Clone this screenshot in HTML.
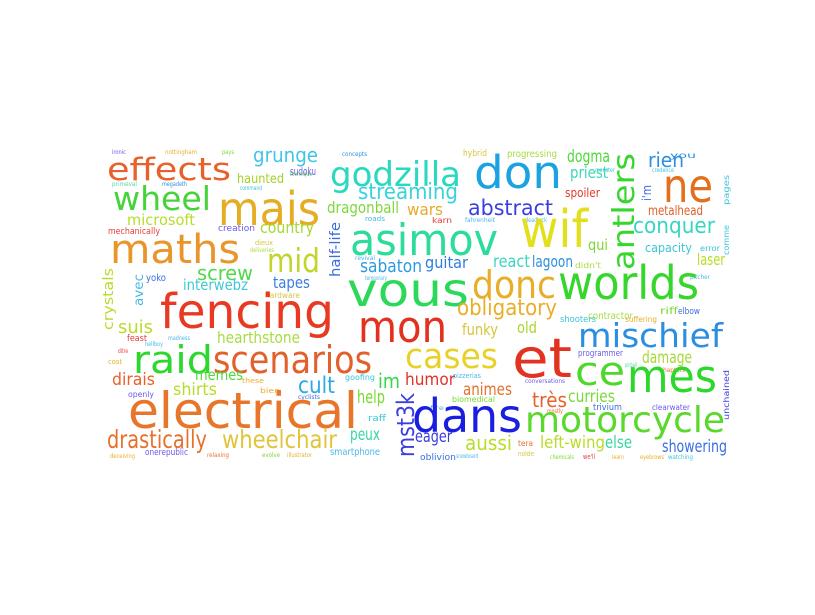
<!DOCTYPE html>
<html><head><meta charset="utf-8"><style>
html,body{margin:0;padding:0;background:#fff;}
svg{display:block}
text{font-family:"DejaVu Sans","Liberation Sans",sans-serif;}
</style></head><body>
<svg width="815" height="615" viewBox="0 0 815 615" xmlns="http://www.w3.org/2000/svg">
<g lengthAdjust="spacingAndGlyphs">
<!-- small filler -->
<text x="112" y="154" font-size="6" fill="#6a5ae8" textLength="14" lengthAdjust="spacingAndGlyphs">ironic</text>
<text x="165" y="154" font-size="6" fill="#e8ae2a" textLength="32" lengthAdjust="spacingAndGlyphs">nottingham</text>
<text x="222" y="154" font-size="6" fill="#7ad830" textLength="12" lengthAdjust="spacingAndGlyphs">pays</text>
<text x="342" y="156" font-size="6" fill="#2c8ee0" textLength="25" lengthAdjust="spacingAndGlyphs">concepts</text>
<text x="112" y="186" font-size="6" fill="#50d8a0" textLength="25" lengthAdjust="spacingAndGlyphs">primeval</text>
<text x="162" y="186" font-size="6" fill="#2c8ee0" textLength="25" lengthAdjust="spacingAndGlyphs">megadeth</text>
<text x="290" y="176" font-size="6" fill="#50d83a" textLength="22" lengthAdjust="spacingAndGlyphs">technique</text>
<text x="240" y="190" font-size="6" fill="#38c6d8" textLength="22" lengthAdjust="spacingAndGlyphs">command</text>
<text x="290" y="178" font-size="1" fill="#fff"> </text>
<text x="290" y="175" font-size="11" fill="#6a5ae8" textLength="26" lengthAdjust="spacingAndGlyphs">sudoku</text>
<text x="108" y="234" font-size="9" fill="#e83a3a" textLength="52" lengthAdjust="spacingAndGlyphs">mechanically</text>
<text x="218" y="231" font-size="9" fill="#6a5ae8" textLength="37" lengthAdjust="spacingAndGlyphs">creation</text>
<text x="255" y="245" font-size="7" fill="#d9c440" textLength="18" lengthAdjust="spacingAndGlyphs">dieux</text>
<text x="250" y="252" font-size="6" fill="#a8dc40" textLength="24" lengthAdjust="spacingAndGlyphs">deliveries</text>
<text x="146" y="281" font-size="10" fill="#3a6ee0" textLength="20" lengthAdjust="spacingAndGlyphs">yoko</text>
<text x="265" y="298" font-size="8" fill="#d9c440" textLength="35" lengthAdjust="spacingAndGlyphs">hardware</text>
<text x="365" y="221" font-size="7" fill="#4ab8e8" textLength="20" lengthAdjust="spacingAndGlyphs">roads</text>
<text x="355" y="260" font-size="6" fill="#4ab8e8" textLength="20" lengthAdjust="spacingAndGlyphs">revival</text>
<text x="365" y="280" font-size="6" fill="#4ab8e8" textLength="22" lengthAdjust="spacingAndGlyphs">temporary</text>
<text x="432" y="223" font-size="8" fill="#e83a3a" textLength="20" lengthAdjust="spacingAndGlyphs">karn</text>
<text x="465" y="222" font-size="6" fill="#4ab8e8" textLength="30" lengthAdjust="spacingAndGlyphs">fahrenheit</text>
<text x="525" y="222" font-size="6" fill="#4ab8e8" textLength="22" lengthAdjust="spacingAndGlyphs">deadlock</text>
<text x="575" y="268" font-size="8" fill="#a8dc40" textLength="26" lengthAdjust="spacingAndGlyphs">didn't</text>
<text x="595" y="172" font-size="6" fill="#38c6d8" textLength="20" lengthAdjust="spacingAndGlyphs">monster</text>
<text x="652" y="172" font-size="6" fill="#38c6d8" textLength="22" lengthAdjust="spacingAndGlyphs">credence</text>
<text x="670" y="158" font-size="8" fill="#2c8ee0" textLength="26" lengthAdjust="spacingAndGlyphs">you</text>
<text x="700" y="251" font-size="8" fill="#38c6d8" textLength="20" lengthAdjust="spacingAndGlyphs">error</text>
<text x="690" y="279" font-size="6" fill="#4ab8e8" textLength="20" lengthAdjust="spacingAndGlyphs">pitcher</text>
<text x="588" y="319" font-size="10" fill="#a8dc40" textLength="45" lengthAdjust="spacingAndGlyphs">contractor</text>
<text x="560" y="322" font-size="9" fill="#38c6d8" textLength="36" lengthAdjust="spacingAndGlyphs">shooters</text>
<text x="625" y="322" font-size="8" fill="#e8ae2a" textLength="32" lengthAdjust="spacingAndGlyphs">suffering</text>
<text x="660" y="314" font-size="10" fill="#7ad830" textLength="18" lengthAdjust="spacingAndGlyphs">riff</text>
<text x="678" y="314" font-size="9" fill="#3a6ee0" textLength="22" lengthAdjust="spacingAndGlyphs">elbow</text>
<text x="578" y="356" font-size="9" fill="#6a5ae8" textLength="45" lengthAdjust="spacingAndGlyphs">programmer</text>
<text x="660" y="372" font-size="6" fill="#e8702a" textLength="25" lengthAdjust="spacingAndGlyphs">chapters</text>
<text x="625" y="367" font-size="6" fill="#50d8a0" textLength="12" lengthAdjust="spacingAndGlyphs">pinball</text>
<text x="525" y="383" font-size="6" fill="#6a5ae8" textLength="40" lengthAdjust="spacingAndGlyphs">conversations</text>
<text x="453" y="378" font-size="7" fill="#4ab8e8" textLength="28" lengthAdjust="spacingAndGlyphs">pizzerias</text>
<text x="453" y="378" font-size="1" fill="#fff"> </text>
<text x="452" y="402" font-size="8" fill="#7ad830" textLength="43" lengthAdjust="spacingAndGlyphs">biomedical</text>
<text x="593" y="410" font-size="9" fill="#3a6ee0" textLength="29" lengthAdjust="spacingAndGlyphs">trivium</text>
<text x="652" y="410" font-size="8" fill="#6a5ae8" textLength="38" lengthAdjust="spacingAndGlyphs">clearwater</text>
<text x="547" y="413" font-size="6" fill="#e8702a" textLength="16" lengthAdjust="spacingAndGlyphs">mostly</text>
<text x="420" y="460" font-size="9" fill="#3a6ee0" textLength="36" lengthAdjust="spacingAndGlyphs">oblivion</text>
<text x="456" y="458" font-size="6" fill="#4ab8e8" textLength="22" lengthAdjust="spacingAndGlyphs">snowboard</text>
<text x="518" y="446" font-size="8" fill="#e8702a" textLength="15" lengthAdjust="spacingAndGlyphs">tera</text>
<text x="518" y="456" font-size="7" fill="#d9c440" textLength="16" lengthAdjust="spacingAndGlyphs">nolde</text>
<text x="550" y="459" font-size="6" fill="#7ad830" textLength="24" lengthAdjust="spacingAndGlyphs">chemicals</text>
<text x="583" y="459" font-size="7" fill="#e83a3a" textLength="12" lengthAdjust="spacingAndGlyphs">we'll</text>
<text x="612" y="459" font-size="6" fill="#e8ae2a" textLength="12" lengthAdjust="spacingAndGlyphs">learn</text>
<text x="640" y="459" font-size="6" fill="#e8ae2a" textLength="24" lengthAdjust="spacingAndGlyphs">eyebrows</text>
<text x="668" y="459" font-size="6" fill="#38c6d8" textLength="25" lengthAdjust="spacingAndGlyphs">watching</text>
<text x="110" y="458" font-size="6" fill="#e8ae2a" textLength="25" lengthAdjust="spacingAndGlyphs">deceiving</text>
<text x="145" y="455" font-size="9" fill="#6a5ae8" textLength="43" lengthAdjust="spacingAndGlyphs">onerepublic</text>
<text x="207" y="457" font-size="6" fill="#e8702a" textLength="22" lengthAdjust="spacingAndGlyphs">relaxing</text>
<text x="262" y="457" font-size="6" fill="#7ad830" textLength="18" lengthAdjust="spacingAndGlyphs">evolve</text>
<text x="287" y="457" font-size="6" fill="#e8ae2a" textLength="25" lengthAdjust="spacingAndGlyphs">illustrator</text>
<text x="330" y="455" font-size="10" fill="#4ab8e8" textLength="50" lengthAdjust="spacingAndGlyphs">smartphone</text>
<text x="127" y="341" font-size="9" fill="#e83a3a" textLength="20" lengthAdjust="spacingAndGlyphs">feast</text>
<text x="145" y="346" font-size="6" fill="#4ab8e8" textLength="18" lengthAdjust="spacingAndGlyphs">hellboy</text>
<text x="168" y="340" font-size="6" fill="#4ab8e8" textLength="22" lengthAdjust="spacingAndGlyphs">madness</text>
<text x="118" y="353" font-size="6" fill="#e83a3a" textLength="10" lengthAdjust="spacingAndGlyphs">ditre</text>
<text x="108" y="364" font-size="7" fill="#e8ae2a" textLength="14" lengthAdjust="spacingAndGlyphs">cost</text>
<text x="128" y="397" font-size="8" fill="#6a5ae8" textLength="26" lengthAdjust="spacingAndGlyphs">openly</text>
<text x="242" y="383" font-size="7" fill="#e8ae2a" textLength="22" lengthAdjust="spacingAndGlyphs">these</text>
<text x="260" y="393" font-size="7" fill="#e8ae2a" textLength="20" lengthAdjust="spacingAndGlyphs">bien</text>
<text x="345" y="380" font-size="8" fill="#38c6d8" textLength="30" lengthAdjust="spacingAndGlyphs">goofing</text>
<text x="298" y="399" font-size="6" fill="#3a6ee0" textLength="22" lengthAdjust="spacingAndGlyphs">cyclists</text>
<text x="368" y="421" font-size="9" fill="#38c6d8" textLength="18" lengthAdjust="spacingAndGlyphs">raff</text>
<text x="430" y="410" font-size="6" fill="#4ab8e8" textLength="14" lengthAdjust="spacingAndGlyphs">fire</text>
<!-- main words -->
<text x="107" y="180" font-size="31" fill="#e8602a" textLength="124" lengthAdjust="spacingAndGlyphs">effects</text>
<text x="113" y="210" font-size="33" fill="#44d43a" textLength="98" lengthAdjust="spacingAndGlyphs">wheel</text>
<text x="218" y="225" font-size="46" fill="#e5ad23" textLength="102" lengthAdjust="spacingAndGlyphs">mais</text>
<text x="253" y="162" font-size="20" fill="#40c4e8" textLength="65" lengthAdjust="spacingAndGlyphs">grunge</text>
<text x="330" y="186" font-size="34" fill="#28d9c0" textLength="131" lengthAdjust="spacingAndGlyphs">godzilla</text>
<text x="358" y="199" font-size="22" fill="#38d3dc" textLength="100" lengthAdjust="spacingAndGlyphs">streaming</text>
<text x="237" y="183" font-size="13" fill="#a5d02a" textLength="47" lengthAdjust="spacingAndGlyphs">haunted</text>
<text x="327" y="213" font-size="16" fill="#7ed73a" textLength="72" lengthAdjust="spacingAndGlyphs">dragonball</text>
<text x="127" y="225" font-size="15" fill="#b8dc2a" textLength="68" lengthAdjust="spacingAndGlyphs">microsoft</text>
<text x="260" y="233" font-size="16" fill="#a5d830" textLength="54" lengthAdjust="spacingAndGlyphs">country</text>
<text x="110" y="263" font-size="40" fill="#e8962a" textLength="130" lengthAdjust="spacingAndGlyphs">maths</text>
<text x="267" y="272" font-size="33" fill="#c3d52d" textLength="53" lengthAdjust="spacingAndGlyphs">mid</text>
<text x="350" y="255" font-size="44" fill="#2bdc9a" textLength="148" lengthAdjust="spacingAndGlyphs">asimov</text>
<text transform="translate(340,277) rotate(-90)" font-size="14" fill="#3a6ee0" textLength="55" lengthAdjust="spacingAndGlyphs">half-life</text>
<text x="360" y="272" font-size="18" fill="#2c9ae0" textLength="62" lengthAdjust="spacingAndGlyphs">sabaton</text>
<text x="197" y="280" font-size="20" fill="#50d94a" textLength="56" lengthAdjust="spacingAndGlyphs">screw</text>
<text x="183" y="290" font-size="15" fill="#3fc8d6" textLength="65" lengthAdjust="spacingAndGlyphs">interwebz</text>
<text x="273" y="288" font-size="16" fill="#3a7ee0" textLength="37" lengthAdjust="spacingAndGlyphs">tapes</text>
<text transform="translate(143,306) rotate(-90)" font-size="13" fill="#4db8e8" textLength="32" lengthAdjust="spacingAndGlyphs">avec</text>
<text transform="translate(113,330) rotate(-90)" font-size="14" fill="#b8dc2a" textLength="62" lengthAdjust="spacingAndGlyphs">crystals</text>
<text x="474" y="188" font-size="45" fill="#1aa3e0" textLength="88" lengthAdjust="spacingAndGlyphs">don</text>
<text x="520" y="247" font-size="52" fill="#e2df1c" textLength="68" lengthAdjust="spacingAndGlyphs">wif</text>
<text transform="translate(634,270) rotate(-90)" font-size="30" fill="#36d62c" textLength="117" lengthAdjust="spacingAndGlyphs">antlers</text>
<text x="663" y="202" font-size="46" fill="#e2701c" textLength="50" lengthAdjust="spacingAndGlyphs">ne</text>
<text x="648" y="167" font-size="20" fill="#2c8ee0" textLength="36" lengthAdjust="spacingAndGlyphs">rien</text>
<text x="567" y="162" font-size="17" fill="#4ed83a" textLength="43" lengthAdjust="spacingAndGlyphs">dogma</text>
<text x="570" y="178" font-size="16" fill="#38d9b8" textLength="38" lengthAdjust="spacingAndGlyphs">priest</text>
<text x="507" y="157" font-size="10" fill="#a8dc40" textLength="50" lengthAdjust="spacingAndGlyphs">progressing</text>
<text x="463" y="156" font-size="9" fill="#d9c440" textLength="24" lengthAdjust="spacingAndGlyphs">hybrid</text>
<text x="468" y="215" font-size="21" fill="#3a3ee0" textLength="85" lengthAdjust="spacingAndGlyphs">abstract</text>
<text x="565" y="197" font-size="12" fill="#e03a2a" textLength="35" lengthAdjust="spacingAndGlyphs">spoiler</text>
<text transform="translate(651,201) rotate(-90)" font-size="12" fill="#3a6ee0" textLength="16" lengthAdjust="spacingAndGlyphs">i'm</text>
<text x="648" y="215" font-size="13" fill="#e0602a" textLength="55" lengthAdjust="spacingAndGlyphs">metalhead</text>
<text x="633" y="233" font-size="22" fill="#38d6c2" textLength="82" lengthAdjust="spacingAndGlyphs">conquer</text>
<text x="407" y="215" font-size="16" fill="#e8aa2a" textLength="36" lengthAdjust="spacingAndGlyphs">wars</text>
<text x="588" y="250" font-size="15" fill="#7ad830" textLength="20" lengthAdjust="spacingAndGlyphs">qui</text>
<text x="645" y="252" font-size="12" fill="#38c6d8" textLength="47" lengthAdjust="spacingAndGlyphs">capacity</text>
<text x="697" y="265" font-size="16" fill="#b8dc2a" textLength="28" lengthAdjust="spacingAndGlyphs">laser</text>
<text x="493" y="267" font-size="17" fill="#38d6c0" textLength="37" lengthAdjust="spacingAndGlyphs">react</text>
<text x="532" y="267" font-size="16" fill="#2c8ee0" textLength="41" lengthAdjust="spacingAndGlyphs">lagoon</text>
<text x="425" y="268" font-size="16" fill="#2c7ee0" textLength="43" lengthAdjust="spacingAndGlyphs">guitar</text>
<text x="472" y="298" font-size="38" fill="#e8ae2a" textLength="84" lengthAdjust="spacingAndGlyphs">donc</text>
<text x="558" y="299" font-size="46" fill="#36d62c" textLength="141" lengthAdjust="spacingAndGlyphs">worlds</text>
<text x="347" y="306" font-size="46" fill="#2cd85a" textLength="122" lengthAdjust="spacingAndGlyphs">vous</text>
<text x="160" y="328" font-size="48" fill="#e83a22" textLength="174" lengthAdjust="spacingAndGlyphs">fencing</text>
<text x="358" y="342" font-size="44" fill="#e2321e" textLength="89" lengthAdjust="spacingAndGlyphs">mon</text>
<text x="118" y="333" font-size="18" fill="#b8dc2a" textLength="35" lengthAdjust="spacingAndGlyphs">suis</text>
<text x="217" y="343" font-size="16" fill="#a8dc40" textLength="83" lengthAdjust="spacingAndGlyphs">hearthstone</text>
<text x="133" y="373" font-size="38" fill="#2cd82c" textLength="80" lengthAdjust="spacingAndGlyphs">raid</text>
<text x="213" y="373" font-size="38" fill="#e2602a" textLength="159" lengthAdjust="spacingAndGlyphs">scenarios</text>
<text x="112" y="385" font-size="17" fill="#e8602a" textLength="43" lengthAdjust="spacingAndGlyphs">dirais</text>
<text x="195" y="380" font-size="15" fill="#50d83a" textLength="48" lengthAdjust="spacingAndGlyphs">memes</text>
<text x="173" y="395" font-size="17" fill="#b8dc2a" textLength="44" lengthAdjust="spacingAndGlyphs">shirts</text>
<text x="298" y="393" font-size="23" fill="#2ca8e8" textLength="37" lengthAdjust="spacingAndGlyphs">cult</text>
<text x="378" y="388" font-size="20" fill="#36d64a" textLength="22" lengthAdjust="spacingAndGlyphs">im</text>
<text x="128" y="428" font-size="50" fill="#e8762a" textLength="230" lengthAdjust="spacingAndGlyphs">electrical</text>
<text x="357" y="403" font-size="18" fill="#7ad830" textLength="28" lengthAdjust="spacingAndGlyphs">help</text>
<text transform="translate(414,457) rotate(-90)" font-size="24" fill="#3a3ee0" textLength="64" lengthAdjust="spacingAndGlyphs">mst3k</text>
<text x="107" y="448" font-size="25" fill="#e8702a" textLength="100" lengthAdjust="spacingAndGlyphs">drastically</text>
<text x="222" y="448" font-size="25" fill="#e0c43a" textLength="115" lengthAdjust="spacingAndGlyphs">wheelchair</text>
<text x="350" y="440" font-size="17" fill="#36d6a6" textLength="30" lengthAdjust="spacingAndGlyphs">peux</text>
<text x="457" y="315" font-size="22" fill="#e8ae2a" textLength="100" lengthAdjust="spacingAndGlyphs">obligatory</text>
<text x="578" y="347" font-size="33" fill="#2c8ee0" textLength="145" lengthAdjust="spacingAndGlyphs">mischief</text>
<text x="462" y="335" font-size="16" fill="#d9c43a" textLength="36" lengthAdjust="spacingAndGlyphs">funky</text>
<text x="517" y="333" font-size="16" fill="#a8d82c" textLength="20" lengthAdjust="spacingAndGlyphs">old</text>
<text x="405" y="368" font-size="35" fill="#e8d22a" textLength="93" lengthAdjust="spacingAndGlyphs">cases</text>
<text x="512" y="377" font-size="54" fill="#e23222" textLength="60" lengthAdjust="spacingAndGlyphs">et</text>
<text x="642" y="363" font-size="17" fill="#a8d83a" textLength="50" lengthAdjust="spacingAndGlyphs">damage</text>
<text x="575" y="385" font-size="40" fill="#4ed82c" textLength="50" lengthAdjust="spacingAndGlyphs">ce</text>
<text x="627" y="392" font-size="45" fill="#2cd82c" textLength="90" lengthAdjust="spacingAndGlyphs">mes</text>
<text x="405" y="385" font-size="17" fill="#e2322a" textLength="50" lengthAdjust="spacingAndGlyphs">humor</text>
<text x="463" y="395" font-size="17" fill="#e8702a" textLength="49" lengthAdjust="spacingAndGlyphs">animes</text>
<text x="532" y="407" font-size="20" fill="#e8602a" textLength="35" lengthAdjust="spacingAndGlyphs">très</text>
<text x="568" y="402" font-size="17" fill="#7ad83a" textLength="47" lengthAdjust="spacingAndGlyphs">curries</text>
<text x="412" y="432" font-size="46" fill="#1a1ee0" textLength="110" lengthAdjust="spacingAndGlyphs">dans</text>
<text x="525" y="432" font-size="36" fill="#5ad82c" textLength="200" lengthAdjust="spacingAndGlyphs">motorcycle</text>
<text x="415" y="442" font-size="17" fill="#3a3ee0" textLength="37" lengthAdjust="spacingAndGlyphs">eager</text>
<text x="465" y="450" font-size="20" fill="#b8dc2a" textLength="47" lengthAdjust="spacingAndGlyphs">aussi</text>
<text x="540" y="448" font-size="17" fill="#b8dc2a" textLength="65" lengthAdjust="spacingAndGlyphs">left-wing</text>
<text x="605" y="448" font-size="17" fill="#36d6a6" textLength="27" lengthAdjust="spacingAndGlyphs">else</text>
<text x="662" y="452" font-size="17" fill="#3a6ee0" textLength="65" lengthAdjust="spacingAndGlyphs">showering</text>
<text transform="translate(729,420) rotate(-90)" font-size="8" fill="#3a3ee0" textLength="50" lengthAdjust="spacingAndGlyphs">unchained</text>
<text transform="translate(729,205) rotate(-90)" font-size="8" fill="#38c6d8" textLength="30" lengthAdjust="spacingAndGlyphs">pages</text>
<text transform="translate(729,255) rotate(-90)" font-size="8" fill="#38c6d8" textLength="30" lengthAdjust="spacingAndGlyphs">comme</text>
</g>
</svg>
</body></html>
